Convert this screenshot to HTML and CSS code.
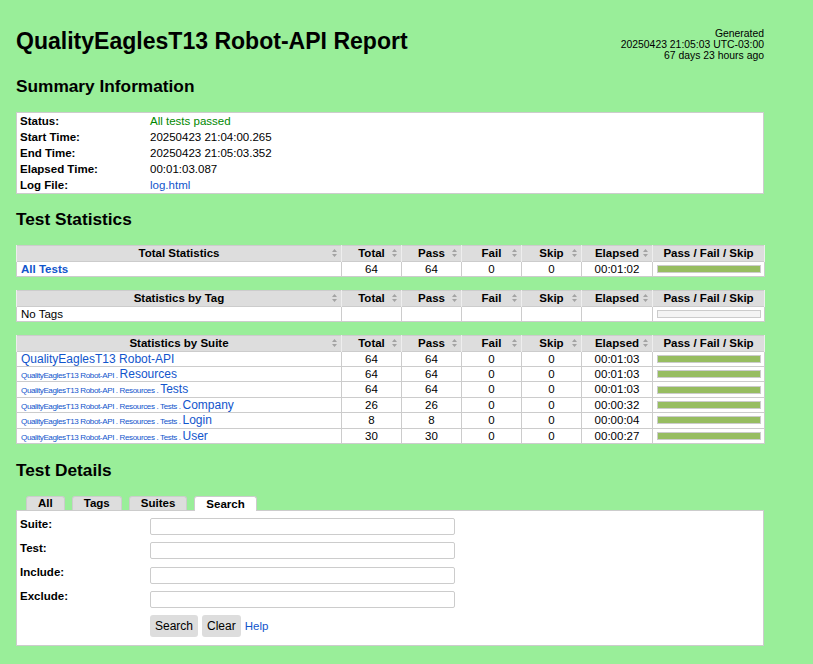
FILE: index.html
```html
<!DOCTYPE html>
<html>
<head>
<meta charset="utf-8">
<title>QualityEaglesT13 Robot-API Report</title>
<link rel="stylesheet" href="styles.css">
</head>
<body>
<div class="header">
  <h1>QualityEaglesT13 Robot-API Report</h1>
  <div class="generated">
    <div>Generated</div>
    <div>20250423 21:05:03 UTC-03:00</div>
    <div>67 days 23 hours ago</div>
  </div>
</div>

<h2>Summary Information</h2>
<table class="details">
  <colgroup><col class="details-label"><col></colgroup>
  <tr><th>Status:</th><td><span class="pass">All tests passed</span></td></tr>
  <tr><th>Start Time:</th><td>20250423 21:04:00.265</td></tr>
  <tr><th>End Time:</th><td>20250423 21:05:03.352</td></tr>
  <tr><th>Elapsed Time:</th><td>00:01:03.087</td></tr>
  <tr><th>Log File:</th><td><a href="#">log.html</a></td></tr>
</table>

<h2 class="after-summary">Test Statistics</h2>

<table class="statistics">
  <colgroup><col><col class="c-stat"><col class="c-stat"><col class="c-stat"><col class="c-stat"><col class="c-elapsed"><col class="c-graph"></colgroup>
  <tr>
    <th>Total Statistics<svg class="sort" width="5" height="8" viewBox="0 0 5 8"><path d="M2.5 0L5 3H0zM0 5h5L2.5 8z"/></svg></th>
    <th>Total<svg class="sort" width="5" height="8" viewBox="0 0 5 8"><path d="M2.5 0L5 3H0zM0 5h5L2.5 8z"/></svg></th>
    <th>Pass<svg class="sort" width="5" height="8" viewBox="0 0 5 8"><path d="M2.5 0L5 3H0zM0 5h5L2.5 8z"/></svg></th>
    <th>Fail<svg class="sort" width="5" height="8" viewBox="0 0 5 8"><path d="M2.5 0L5 3H0zM0 5h5L2.5 8z"/></svg></th>
    <th>Skip<svg class="sort" width="5" height="8" viewBox="0 0 5 8"><path d="M2.5 0L5 3H0zM0 5h5L2.5 8z"/></svg></th>
    <th>Elapsed<svg class="sort" width="5" height="8" viewBox="0 0 5 8"><path d="M2.5 0L5 3H0zM0 5h5L2.5 8z"/></svg></th>
    <th>Pass / Fail / Skip</th>
  </tr>
  <tr>
    <td class="name"><a href="#" class="bold">All Tests</a></td>
    <td>64</td><td>64</td><td>0</td><td>0</td><td>00:01:02</td>
    <td class="graph-cell"><div class="graph"><div class="pass-bar"></div></div></td>
  </tr>
</table>

<table class="statistics">
  <colgroup><col><col class="c-stat"><col class="c-stat"><col class="c-stat"><col class="c-stat"><col class="c-elapsed"><col class="c-graph"></colgroup>
  <tr>
    <th>Statistics by Tag<svg class="sort" width="5" height="8" viewBox="0 0 5 8"><path d="M2.5 0L5 3H0zM0 5h5L2.5 8z"/></svg></th>
    <th>Total<svg class="sort" width="5" height="8" viewBox="0 0 5 8"><path d="M2.5 0L5 3H0zM0 5h5L2.5 8z"/></svg></th>
    <th>Pass<svg class="sort" width="5" height="8" viewBox="0 0 5 8"><path d="M2.5 0L5 3H0zM0 5h5L2.5 8z"/></svg></th>
    <th>Fail<svg class="sort" width="5" height="8" viewBox="0 0 5 8"><path d="M2.5 0L5 3H0zM0 5h5L2.5 8z"/></svg></th>
    <th>Skip<svg class="sort" width="5" height="8" viewBox="0 0 5 8"><path d="M2.5 0L5 3H0zM0 5h5L2.5 8z"/></svg></th>
    <th>Elapsed<svg class="sort" width="5" height="8" viewBox="0 0 5 8"><path d="M2.5 0L5 3H0zM0 5h5L2.5 8z"/></svg></th>
    <th>Pass / Fail / Skip</th>
  </tr>
  <tr>
    <td class="name">No Tags</td>
    <td></td><td></td><td></td><td></td><td></td>
    <td class="graph-cell"><div class="graph"></div></td>
  </tr>
</table>

<table class="statistics last">
  <colgroup><col><col class="c-stat"><col class="c-stat"><col class="c-stat"><col class="c-stat"><col class="c-elapsed"><col class="c-graph"></colgroup>
  <tr>
    <th>Statistics by Suite<svg class="sort" width="5" height="8" viewBox="0 0 5 8"><path d="M2.5 0L5 3H0zM0 5h5L2.5 8z"/></svg></th>
    <th>Total<svg class="sort" width="5" height="8" viewBox="0 0 5 8"><path d="M2.5 0L5 3H0zM0 5h5L2.5 8z"/></svg></th>
    <th>Pass<svg class="sort" width="5" height="8" viewBox="0 0 5 8"><path d="M2.5 0L5 3H0zM0 5h5L2.5 8z"/></svg></th>
    <th>Fail<svg class="sort" width="5" height="8" viewBox="0 0 5 8"><path d="M2.5 0L5 3H0zM0 5h5L2.5 8z"/></svg></th>
    <th>Skip<svg class="sort" width="5" height="8" viewBox="0 0 5 8"><path d="M2.5 0L5 3H0zM0 5h5L2.5 8z"/></svg></th>
    <th>Elapsed<svg class="sort" width="5" height="8" viewBox="0 0 5 8"><path d="M2.5 0L5 3H0zM0 5h5L2.5 8z"/></svg></th>
    <th>Pass / Fail / Skip</th>
  </tr>
  <tr>
    <td class="name"><a href="#" class="suite">QualityEaglesT13 Robot-API</a></td>
    <td>64</td><td>64</td><td>0</td><td>0</td><td>00:01:03</td>
    <td class="graph-cell"><div class="graph"><div class="pass-bar"></div></div></td>
  </tr>
  <tr>
    <td class="name"><a href="#"><span class="parent-name">QualityEaglesT13 Robot-API . </span><span class="suite">Resources</span></a></td>
    <td>64</td><td>64</td><td>0</td><td>0</td><td>00:01:03</td>
    <td class="graph-cell"><div class="graph"><div class="pass-bar"></div></div></td>
  </tr>
  <tr>
    <td class="name"><a href="#"><span class="parent-name">QualityEaglesT13 Robot-API . Resources . </span><span class="suite">Tests</span></a></td>
    <td>64</td><td>64</td><td>0</td><td>0</td><td>00:01:03</td>
    <td class="graph-cell"><div class="graph"><div class="pass-bar"></div></div></td>
  </tr>
  <tr>
    <td class="name"><a href="#"><span class="parent-name">QualityEaglesT13 Robot-API . Resources . Tests . </span><span class="suite">Company</span></a></td>
    <td>26</td><td>26</td><td>0</td><td>0</td><td>00:00:32</td>
    <td class="graph-cell"><div class="graph"><div class="pass-bar"></div></div></td>
  </tr>
  <tr>
    <td class="name"><a href="#"><span class="parent-name">QualityEaglesT13 Robot-API . Resources . Tests . </span><span class="suite">Login</span></a></td>
    <td>8</td><td>8</td><td>0</td><td>0</td><td>00:00:04</td>
    <td class="graph-cell"><div class="graph"><div class="pass-bar"></div></div></td>
  </tr>
  <tr>
    <td class="name"><a href="#"><span class="parent-name">QualityEaglesT13 Robot-API . Resources . Tests . </span><span class="suite">User</span></a></td>
    <td>30</td><td>30</td><td>0</td><td>0</td><td>00:00:27</td>
    <td class="graph-cell"><div class="graph"><div class="pass-bar"></div></div></td>
  </tr>
</table>

<h2>Test Details</h2>
<div class="tabs">
  <div class="tab">All</div>
  <div class="tab">Tags</div>
  <div class="tab">Suites</div>
  <div class="tab active">Search</div>
</div>
<div class="search-box">
  <div class="search-row"><label>Suite:</label><input type="text"></div>
  <div class="search-row"><label>Test:</label><input type="text"></div>
  <div class="search-row"><label>Include:</label><input type="text"></div>
  <div class="search-row"><label>Exclude:</label><input type="text"></div>
  <div class="search-actions">
    <button type="button">Search</button>
    <button type="button">Clear</button>
    <a href="#">Help</a>
  </div>
</div>
</body>
</html>
```

FILE: styles.css
```css
html, body {
  margin: 0;
  background: #99ee99;
}
body {
  padding: 28px 16px 20px 16px;
  font-family: "Liberation Sans", Arial, Helvetica, sans-serif;
  font-size: 11.52px;
  color: #000;
}
a {
  color: #1155cc;
  text-decoration: none;
}
.header {
  width: 748px;
  display: flex;
  justify-content: space-between;
  align-items: flex-start;
  margin-bottom: 15px;
}
h1 {
  margin: 0;
  font-size: 23.04px;
  line-height: 26px;
  font-weight: bold;
}
.generated {
  text-align: right;
  font-size: 10.4px;
  line-height: 11px;
  white-space: nowrap;
}
h2 {
  margin: 0 0 16px 0;
  font-size: 17.28px;
  line-height: 20px;
  font-weight: bold;
}
.details {
  width: 748px;
  box-sizing: border-box;
  table-layout: fixed;
  border-collapse: separate;
  border-spacing: 0;
  border: 1px solid #cccccc;
  background: #fff;
  margin-bottom: 15px;
}
.details-label { width: 130px; }
.details th, .details td {
  padding: 0 3px;
  line-height: 16px;
  text-align: left;
  vertical-align: top;
}
.details th { font-weight: bold; }
.pass { color: #008800; }

.statistics {
  width: 749px;
  table-layout: fixed;
  border-collapse: collapse;
  border: 1px solid #cccccc;
  margin-bottom: 13px;
}
.statistics.last { margin-bottom: 16px; }
.c-stat { width: 60px; }
.c-elapsed { width: 71px; }
.c-graph { width: 112px; }
.statistics th {
  position: relative;
  background: #dddddd;
  padding: 1px 4px 0 4px;
  line-height: 13.6px;
  font-weight: bold;
  text-align: center;
  border-left: 1px solid #eeeeee;
  border-right: 1px solid #eeeeee;
  white-space: nowrap;
}
.sort {
  position: absolute;
  right: 4px;
  top: 50%;
  margin-top: -4px;
  fill: #a3a3a3;
}
.statistics td {
  background: #fff;
  border: 1px solid #cccccc;
  padding: 1px 4px 0 4px;
  line-height: 13.4px;
  text-align: center;
  vertical-align: middle;
  white-space: nowrap;
  overflow: hidden;
}
.statistics td.name { text-align: left; }
.bold { font-weight: bold; }
.suite { font-size: 12px; line-height: 12px; }
.parent-name {
  font-size: 8.06px;
  letter-spacing: -0.38px;
  line-height: 8px;
}
.statistics td.graph-cell {
  padding: 0 4px;
  height: 14.4px;
}
.graph {
  box-sizing: border-box;
  width: 104px;
  height: 8px;
  border: 1px solid #cccccc;
  background: #f4f4f4;
  display: flex;
}
.pass-bar {
  flex: 1;
  background: #97bd61;
}

.tabs {
  display: flex;
  gap: 7px;
  padding-left: 10px;
  align-items: flex-end;
}
.tab {
  background: #dddddd;
  border: 1px solid #cccccc;
  border-bottom: none;
  border-radius: 3px 3px 0 0;
  padding: 0 11px;
  line-height: 13px;
  font-weight: bold;
}
.tab.active {
  background: #fff;
  position: relative;
  margin-bottom: -1px;
  line-height: 14px;
  z-index: 1;
}
.search-box {
  width: 748px;
  box-sizing: border-box;
  border: 1px solid #cccccc;
  background: #fff;
  padding: 7px 3px 8px 3px;
}
.search-row {
  display: flex;
  align-items: flex-start;
  margin-bottom: 7.3px;
}
.search-row label {
  width: 130px;
  font-weight: bold;
  line-height: 14px;
  margin-top: -1.5px;
}
.search-row input {
  box-sizing: border-box;
  width: 305px;
  height: 17px;
  margin: 0;
  padding: 0 3px;
  border: 1px solid #cccccc;
  border-radius: 2px;
  font-family: inherit;
  font-size: 11.52px;
}
.search-actions {
  display: flex;
  align-items: center;
  gap: 4px;
  padding-left: 130px;
}
.search-actions button {
  height: 22px;
  padding: 0 5px;
  border: none;
  border-radius: 3px;
  background: #dddddd;
  font-family: inherit;
  font-size: 12px;
  color: #000;
  margin: 0;
}
```
